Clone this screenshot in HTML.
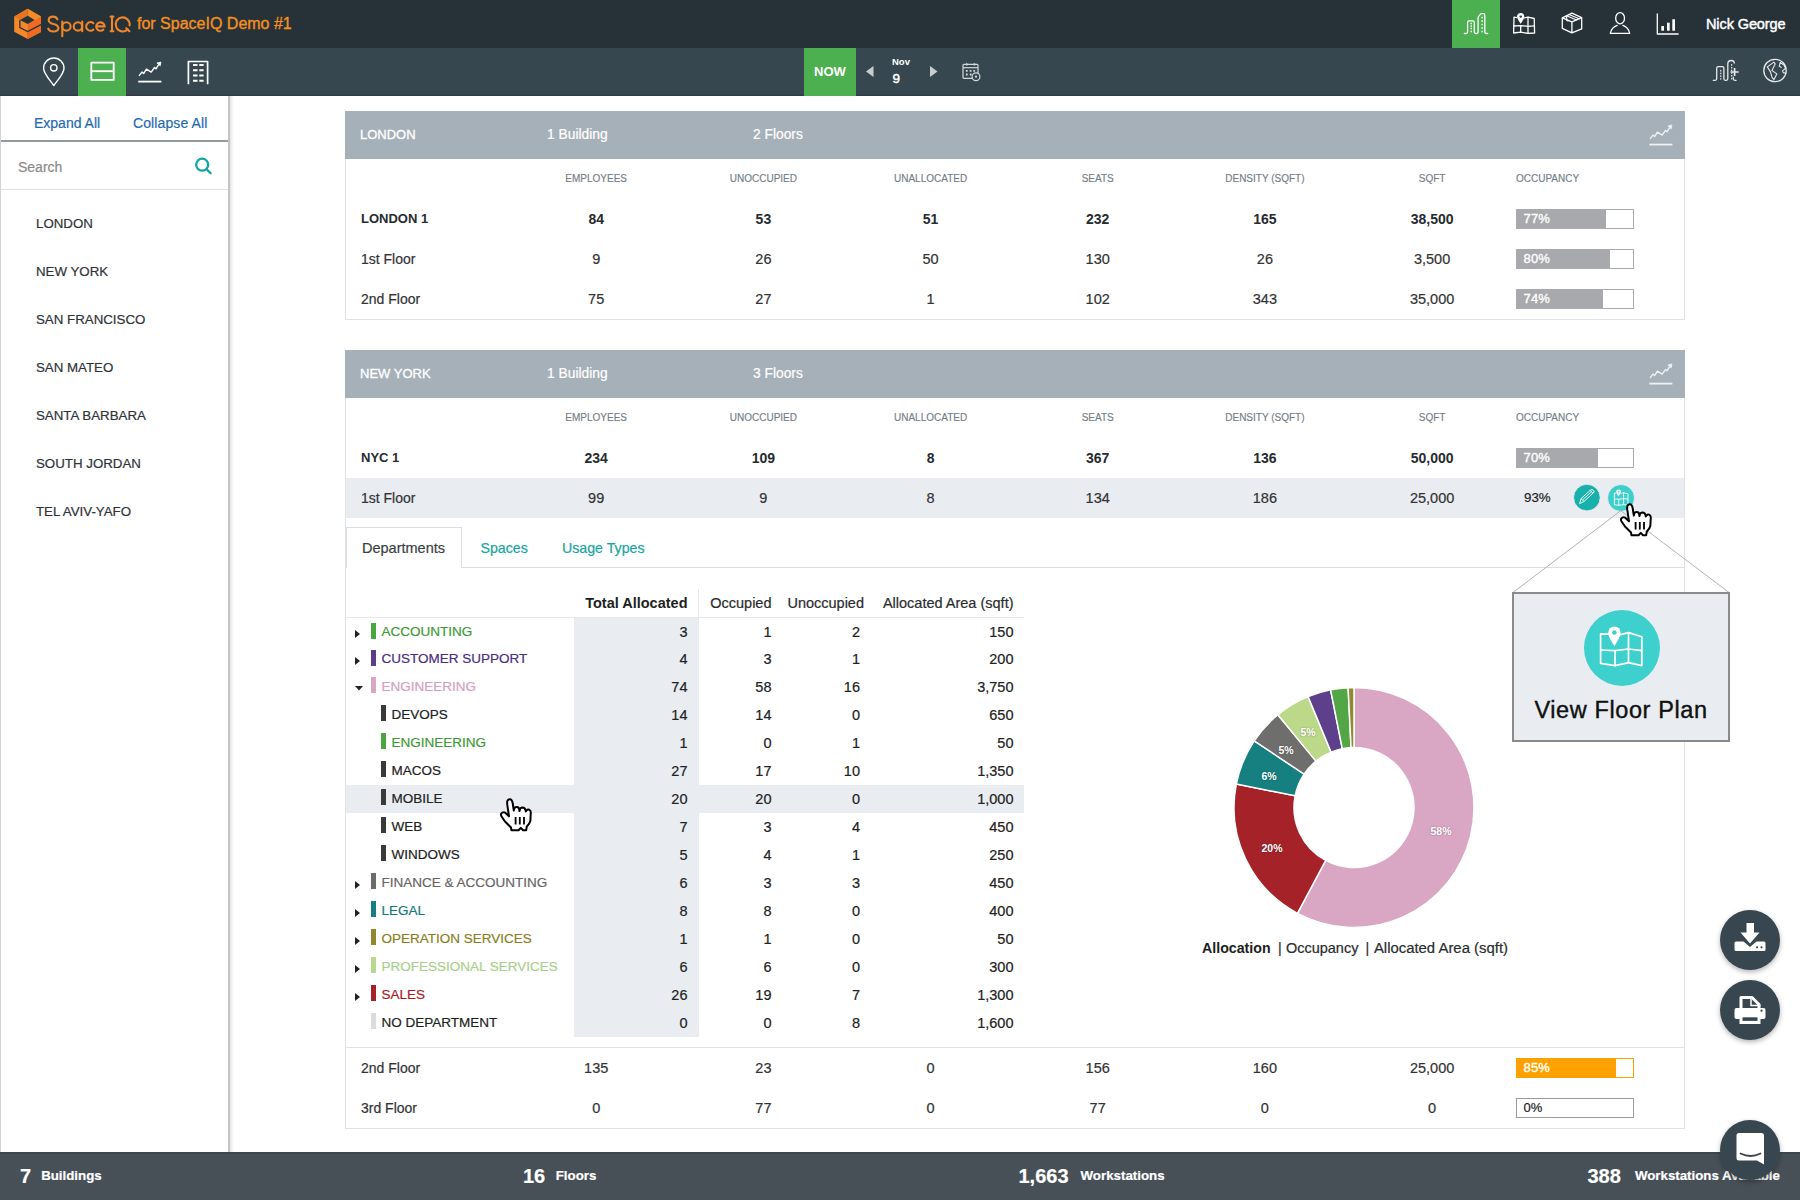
<!DOCTYPE html><html><head><meta charset="utf-8"><style>
html,body{margin:0;padding:0;}
body{width:1800px;height:1200px;overflow:hidden;position:relative;background:#fff;font-family:"Liberation Sans", sans-serif;}
.t{position:absolute;white-space:nowrap;}
.b{position:absolute;}
svg{position:absolute;overflow:visible;}
</style></head><body>
<div class="b" style="left:0px;top:0px;width:1800px;height:48px;background:#263238;"></div>
<div class="b" style="left:0px;top:48px;width:1800px;height:48px;background:#37474f;"></div>
<div class="b" style="left:0px;top:94px;width:1800px;height:2px;background:linear-gradient(#33424a,#2c3a42);"></div>
<svg style="left:0;top:0" width="60" height="48" viewBox="0 0 60 48">
<polygon points="27.7,8.8 41,16.5 41,32 27.7,39 14.2,31.7 14.2,16.5" fill="#f5892a"/>
<polygon points="27.7,24 41,16.5 41,32 27.7,39" fill="#f06a22"/>
<polygon points="27.7,8.8 41,16.5 34.6,19.9 27.7,15.7" fill="#f58a26"/>
<polygon points="27.7,8.8 14.2,16.5 19.9,20.1 27.7,15.7" fill="#e8741f"/>
<polygon points="27.7,15.7 34.6,19.9 27.7,24 19.9,20.1" fill="#263238"/>
<polyline points="19.9,20.1 19.9,27.6 27.7,31.6 41,24.6" fill="none" stroke="#263238" stroke-width="1.3"/>
<line x1="27.7" y1="9" x2="27.7" y2="15.7" stroke="#c9621c" stroke-width="0.6"/>
<line x1="27.7" y1="31.8" x2="27.7" y2="39" stroke="#c9621c" stroke-width="0.6"/>
</svg>
<svg style="left:40px;top:8px" width="96" height="34" viewBox="40 8 96 34" fill="none" stroke="#f0862a" stroke-width="2.1" stroke-linecap="round">
<path d="M57.4 19.3 C56.7 17.5 55 16.6 53 16.6 C50.4 16.6 48.7 18 48.7 20.2 C48.7 22.6 51 23.3 53.4 23.9 C56 24.5 58.4 25.4 58.4 28.1 C58.4 30.3 56.4 31.5 53.5 31.5 C50.9 31.5 49 30.5 48.2 28.6"/>
<path d="M62.3 21.6 V36.3"/><circle cx="66.4" cy="26.4" r="4.2"/>
<circle cx="77.9" cy="26.4" r="4.2"/><path d="M82.2 21.6 V31.2"/>
<path d="M93.4 23.2 A4.3 4.3 0 1 0 93.4 29.6"/>
<path d="M96.3 26.4 H104.6 A4.2 4.2 0 1 0 103.4 29.5"/>
<path d="M112 16.6 V31.3 M110.6 16.6 H113.4 M110.6 31.3 H113.4"/>
<path d="M127.6 29.4 A7 7 0 1 1 129.6 25.4"/><path d="M126.3 28.2 L129.4 31.2"/>
</svg>
<div class="t" style="left:137px;top:14.0px;line-height:20px;font-size:16px;color:#f5901f;font-weight:normal;letter-spacing:0px;-webkit-text-stroke:0.35px #f5901f;">for SpaceIQ Demo #1</div>
<div class="b" style="left:1452px;top:0px;width:48px;height:48px;background:#4caf50;"></div>
<svg style="left:1450px;top:0" width="250" height="48" viewBox="1450 0 250 48" fill="none" stroke="#fff" stroke-width="1.3" stroke-linejoin="round" stroke-linecap="round">
<path d="M1464.3 33.5 H1466.1 Q1467.6 33.5 1467.6 32 V22.3 Q1467.6 20.8 1469.1 20.8 H1472.8 Q1474.3 20.8 1474.3 22.3 V32 Q1474.3 33.5 1475.8 33.5 H1476.6 Q1478.1 33.5 1478.1 32 V17.1 L1480.5 14.2 Q1481 13.6 1481.8 13.6 H1483.3 Q1484.8 13.6 1484.8 15.1 V32 Q1484.8 33.5 1486.3 33.5 H1487.7"/>
<path d="M1471.2 23.2v0.6M1471.2 25.7v0.6M1471.2 28.2v0.6M1471.2 31.2v0.6M1482.1 17.2v0.6M1482.1 20.8v0.6M1482.1 24.2v0.6M1482.1 27.6v0.6M1482.1 31.2v0.6" stroke-width="1.4"/>
<path d="M1517 17.6 L1514 17.2 L1513.6 33 L1520.7 32.2 L1528 33.4 L1534.6 33 L1534.2 18.5 L1528 17.2 L1524.5 17.8"/>
<path d="M1513.8 26 L1520.7 25.6 L1528 26.3 L1534.4 25.8 M1520.7 25.6 V32.2 M1528 17.2 V33.4"/>
<path d="M1520.7 13 a3.6 3.6 0 0 1 3.6 3.6 c0 2.6 -3.6 7.2 -3.6 7.2 c0 0 -3.6 -4.6 -3.6 -7.2 a3.6 3.6 0 0 1 3.6 -3.6z" fill="#fff" stroke="none"/>
<circle cx="1520.7" cy="16.6" r="1.2" fill="#263238" stroke="none"/>
<path d="M1562.3 17.8 L1571.9 13.1 L1581.7 17.6 V28.9 L1571.9 32.9 L1562.3 28.4 Z M1562.3 17.8 L1571.9 21.8 L1581.7 17.6 M1571.9 21.8 V32.9"/>
<path d="M1566.5 15.8 L1576.5 20 M1569 14.5 L1579 18.8" stroke-width="1.2"/>
<path d="M1566.5 16 L1566.8 20.5 L1568 21" stroke-width="1.2"/>
<ellipse cx="1620.1" cy="18.2" rx="4.4" ry="5.6"/>
<path d="M1617.2 25.3 Q1611.5 27.2 1610.3 33.3 H1629.7 Q1628.5 27.2 1622.9 25.3"/>
<path d="M1657.3 13.8 V34 H1678.2"/>
<rect x="1661.3" y="26" width="2.7" height="4.7" fill="#fff" stroke="none"/>
<rect x="1667" y="22.7" width="2.7" height="8" fill="#fff" stroke="none"/>
<rect x="1672.3" y="19.3" width="2.7" height="11.4" fill="#fff" stroke="none"/>
</svg>
<div class="t" style="left:1706px;top:14.0px;line-height:20px;font-size:14.5px;color:#fff;font-weight:normal;letter-spacing:-0.1px;-webkit-text-stroke:0.45px #fff;">Nick George</div>
<div class="b" style="left:78px;top:48px;width:48px;height:48px;background:#4caf50;"></div>
<svg style="left:0px;top:48px" width="230" height="48" viewBox="0 48 230 48" fill="none" stroke="#fff" stroke-width="1.4" stroke-linejoin="round">
<path d="M53.8 85.5 C49.5 79.5 43.6 73.5 43.6 68.2 A10.2 10.2 0 0 1 64 68.2 C64 73.5 58.1 79.5 53.8 85.5 Z"/>
<circle cx="53.8" cy="67.8" r="3.2"/>
<rect x="91.3" y="62.7" width="22.4" height="17.2" stroke-width="1.8"/>
<line x1="91.3" y1="71.2" x2="113.7" y2="71.2" stroke-width="1.9"/>
<path d="M188.4 84.3 V61.5 H207.6 V84.3" stroke-width="1.7"/>
<path d="M193 65h4.5M199.3 65h4.3M193 70.3h4.5M199.3 70.3h4.3M193 75.5h4.5M199.3 75.5h4.3M193 80.7h4.5M199.3 80.7h4.3" stroke-width="2.1"/>
</svg>
<svg style="left:135.9px;top:60.3px" width="28" height="26" viewBox="-2 -2 28 26" fill="none" stroke="#fff" stroke-width="1.4" stroke-linejoin="round" stroke-linecap="round">
<path d="M1.4 13.4 L4 10.1 L5.6 11.6 L8.4 7.2 L13.2 10.1 L16.6 5.4 L18 6.8 L21.6 1.2"/>
<polygon points="19.3,0.9 22.9,0 22.3,3.5" fill="#fff" stroke-width="0.8"/>
<line x1="0.3" y1="19.6" x2="23.4" y2="19.6" stroke-width="1.8" stroke-linecap="butt"/>
</svg>
<div class="b" style="left:804px;top:48px;width:52px;height:48px;background:#4caf50;"></div>
<div class="t" style="left:804.0px;width:52px;text-align:center;top:61.5px;line-height:20px;font-size:13px;color:#fff;font-weight:bold;">NOW</div>
<svg style="left:866px;top:66px" width="8" height="11" viewBox="0 0 8 11"><polygon points="7.5,0 7.5,11 0,5.5" fill="#c8cdd0"/></svg>
<svg style="left:930px;top:66px" width="8" height="11" viewBox="0 0 8 11"><polygon points="0,0 0,11 7.5,5.5" fill="#c8cdd0"/></svg>
<div class="t" style="left:892px;top:55.5px;line-height:12px;font-size:9.5px;color:#fff;font-weight:bold;">Nov</div>
<div class="t" style="left:892.5px;top:70.5px;line-height:16px;font-size:13.5px;color:#fff;font-weight:normal;-webkit-text-stroke:0.45px #fff;">9</div>
<svg style="left:962px;top:62px" width="22" height="22" viewBox="0 0 22 22" fill="none" stroke="#d4d8db" stroke-width="1.2">
<path d="M10.5 16.3 H2 Q1 16.3 1 15.3 V3.3 Q1 2.3 2 2.3 H15 Q16 2.3 16 3.3 V11"/>
<line x1="1" y1="5.7" x2="16" y2="5.7"/>
<path d="M4.7 1.2 V3.6 M12.4 1.2 V3.6" stroke-width="1.5"/>
<path d="M3.9 8.9h1.8M7.7 8.9h1.8M11.3 8.9h1.8M3.9 12.5h1.8M7.7 12.5h1.8" stroke-width="1.8"/>
<circle cx="14" cy="14.7" r="3.9"/>
<circle cx="14" cy="14.7" r="1.1" fill="#d4d8db" stroke="none"/>
</svg>
<svg style="left:1700px;top:48px" width="100" height="48" viewBox="1700 48 100 48" fill="none" stroke="#e6e9eb" stroke-width="1.3" stroke-linejoin="round" stroke-linecap="round">
<path d="M1713.3 80.3 H1715.2 Q1716.7 80.3 1716.7 78.8 V68.2 Q1716.7 66.7 1718.2 66.7 H1722.4 Q1723.9 66.7 1723.9 68.2 V78.8 Q1723.9 80.3 1725.4 80.3 H1726.3 Q1727.8 80.3 1727.8 78.8 V64 Q1727.8 60.5 1731.3 60.5 Q1734.2 60.5 1734.2 63"/>
<path d="M1733.3 77.2 V78.8 Q1733.3 80.3 1734.8 80.3 H1736.1"/>
<path d="M1720.8 70.5v0.5M1720.8 73.2v0.5M1720.8 75.9v0.5M1720.8 78.6v0.5M1731.7 64.7v0.5M1731.7 67.4v0.5M1731.7 70.1v0.5M1731.7 72.8v0.5M1731.7 75.5v0.5M1731.7 78.4v0.5" stroke-width="1.3"/>
<path d="M1730.5 72 H1738.7 M1734.6 68.1 V75.9" stroke-width="1.7" stroke-linecap="butt"/>
<circle cx="1775" cy="70.5" r="11.2"/>
<path d="M1767.3 66.9 L1773.9 62.1 L1775.2 63.9 L1771.9 70.4 L1776.8 73.9 L1774 79.6 L1772.1 77.6 L1770.5 71.9 Z" stroke-width="1.1"/>
<path d="M1780.2 62.4 L1784.2 65.3 L1785.5 68.3 L1782.5 70.9 L1783.2 72.6 L1785.8 73.3 M1780.2 62.4 L1779.3 66.2 L1781.2 67.4" stroke-width="1.1"/>
</svg>
<div class="b" style="left:0px;top:96px;width:229px;height:1056px;background:#fff;border-left:1px solid #d0d4d8;box-sizing:border-box;"></div>
<div class="b" style="left:228px;top:96px;width:2px;height:1056px;background:#c3c3c3;"></div>
<div class="b" style="left:230px;top:96px;width:4px;height:1056px;background:linear-gradient(to right, rgba(0,0,0,0.1), rgba(0,0,0,0));"></div>
<div class="t" style="left:34px;top:113.0px;line-height:20px;font-size:14px;color:#1f6bb2;font-weight:normal;-webkit-text-stroke:0.2px #1f6bb2;">Expand All</div>
<div class="t" style="left:133px;top:113.0px;line-height:20px;font-size:14px;color:#1f6bb2;font-weight:normal;letter-spacing:0.1px;-webkit-text-stroke:0.2px #1f6bb2;">Collapse All</div>
<div class="b" style="left:1px;top:140px;width:227px;height:2px;background:#8e9ba5;"></div>
<div class="t" style="left:18px;top:157.0px;line-height:20px;font-size:14px;color:#8a8a8a;font-weight:normal;-webkit-text-stroke:0.2px #8a8a8a;">Search</div>
<svg style="left:194px;top:157px" width="20" height="20" viewBox="0 0 20 20" fill="none" stroke="#0fa69f" stroke-width="2.3">
<circle cx="8.2" cy="7.7" r="6"/><line x1="12.6" y1="12.2" x2="16.6" y2="16.2" stroke-linecap="round"/>
</svg>
<div class="b" style="left:1px;top:189px;width:227px;height:1px;background:#dde1e4;"></div>
<div class="t" style="left:36px;top:213.5px;line-height:20px;font-size:13.3px;color:#2e3338;font-weight:normal;-webkit-text-stroke:0.2px #2e3338;">LONDON</div>
<div class="t" style="left:36px;top:261.5px;line-height:20px;font-size:13.3px;color:#2e3338;font-weight:normal;-webkit-text-stroke:0.2px #2e3338;">NEW YORK</div>
<div class="t" style="left:36px;top:309.5px;line-height:20px;font-size:13.3px;color:#2e3338;font-weight:normal;-webkit-text-stroke:0.2px #2e3338;">SAN FRANCISCO</div>
<div class="t" style="left:36px;top:357.5px;line-height:20px;font-size:13.3px;color:#2e3338;font-weight:normal;-webkit-text-stroke:0.2px #2e3338;">SAN MATEO</div>
<div class="t" style="left:36px;top:405.5px;line-height:20px;font-size:13.3px;color:#2e3338;font-weight:normal;-webkit-text-stroke:0.2px #2e3338;">SANTA BARBARA</div>
<div class="t" style="left:36px;top:453.5px;line-height:20px;font-size:13.3px;color:#2e3338;font-weight:normal;-webkit-text-stroke:0.2px #2e3338;">SOUTH JORDAN</div>
<div class="t" style="left:36px;top:501.5px;line-height:20px;font-size:13.3px;color:#2e3338;font-weight:normal;-webkit-text-stroke:0.2px #2e3338;">TEL AVIV-YAFO</div>
<div class="b" style="left:345px;top:111px;width:1340px;height:209px;background:#fff;border:1px solid #dfe3e7;box-sizing:border-box;"></div>
<div class="b" style="left:345px;top:111px;width:1340px;height:48px;background:#a6b0b9;"></div>
<div class="t" style="left:360px;top:125.0px;line-height:20px;font-size:13px;color:#fff;font-weight:normal;-webkit-text-stroke:0.3px #fff;">LONDON</div>
<div class="t" style="left:547px;top:125.0px;line-height:20px;font-size:13.8px;color:#fff;font-weight:normal;-webkit-text-stroke:0.2px #fff;">1 Building</div>
<div class="t" style="left:753px;top:125.0px;line-height:20px;font-size:13.8px;color:#fff;font-weight:normal;-webkit-text-stroke:0.2px #fff;">2 Floors</div>
<svg style="left:1647px;top:123px" width="28" height="26" viewBox="-2 -2 28 26" fill="none" stroke="#eef1f3" stroke-width="1.4" stroke-linejoin="round" stroke-linecap="round">
<path d="M1.4 13.4 L4 10.1 L5.6 11.6 L8.4 7.2 L13.2 10.1 L16.6 5.4 L18 6.8 L21.6 1.2"/>
<polygon points="19.3,0.9 22.9,0 22.3,3.5" fill="#eef1f3" stroke-width="0.8"/>
<line x1="0.3" y1="19.6" x2="23.4" y2="19.6" stroke-width="1.8" stroke-linecap="butt"/>
</svg>
<div class="t" style="left:516.2px;width:160px;text-align:center;top:168.7px;line-height:20px;font-size:10px;color:#737e87;font-weight:normal;-webkit-text-stroke:0.15px #737e87;">EMPLOYEES</div>
<div class="t" style="left:683.4px;width:160px;text-align:center;top:168.7px;line-height:20px;font-size:10px;color:#737e87;font-weight:normal;-webkit-text-stroke:0.15px #737e87;">UNOCCUPIED</div>
<div class="t" style="left:850.6px;width:160px;text-align:center;top:168.7px;line-height:20px;font-size:10px;color:#737e87;font-weight:normal;-webkit-text-stroke:0.15px #737e87;">UNALLOCATED</div>
<div class="t" style="left:1017.7px;width:160px;text-align:center;top:168.7px;line-height:20px;font-size:10px;color:#737e87;font-weight:normal;-webkit-text-stroke:0.15px #737e87;">SEATS</div>
<div class="t" style="left:1184.9px;width:160px;text-align:center;top:168.7px;line-height:20px;font-size:10px;color:#737e87;font-weight:normal;-webkit-text-stroke:0.15px #737e87;">DENSITY (SQFT)</div>
<div class="t" style="left:1352.1px;width:160px;text-align:center;top:168.7px;line-height:20px;font-size:10px;color:#737e87;font-weight:normal;-webkit-text-stroke:0.15px #737e87;">SQFT</div>
<div class="t" style="left:1516px;top:168.7px;line-height:20px;font-size:10px;color:#737e87;font-weight:normal;-webkit-text-stroke:0.15px #737e87;">OCCUPANCY</div>
<div class="t" style="left:361px;top:209.0px;line-height:20px;font-size:13px;color:#262b30;font-weight:bold;">LONDON 1</div>
<div class="t" style="left:516.2px;width:160px;text-align:center;top:209.0px;line-height:20px;font-size:14px;color:#262b30;font-weight:bold;">84</div>
<div class="t" style="left:683.4px;width:160px;text-align:center;top:209.0px;line-height:20px;font-size:14px;color:#262b30;font-weight:bold;">53</div>
<div class="t" style="left:850.6px;width:160px;text-align:center;top:209.0px;line-height:20px;font-size:14px;color:#262b30;font-weight:bold;">51</div>
<div class="t" style="left:1017.7px;width:160px;text-align:center;top:209.0px;line-height:20px;font-size:14px;color:#262b30;font-weight:bold;">232</div>
<div class="t" style="left:1184.9px;width:160px;text-align:center;top:209.0px;line-height:20px;font-size:14px;color:#262b30;font-weight:bold;">165</div>
<div class="t" style="left:1352.1px;width:160px;text-align:center;top:209.0px;line-height:20px;font-size:14px;color:#262b30;font-weight:bold;">38,500</div>
<div class="b" style="left:1516px;top:209px;width:118px;height:20px;background:#fff;border:1px solid #a7a9ac;box-sizing:border-box;"></div>
<div class="b" style="left:1516px;top:209px;width:90px;height:20px;background:#a7a9ac;"></div>
<div class="t" style="left:1523.5px;top:209.0px;line-height:20px;font-size:13px;color:#fff;font-weight:normal;letter-spacing:0.2px;-webkit-text-stroke:0.35px #fff;">77%</div>
<div class="t" style="left:361px;top:249.0px;line-height:20px;font-size:14px;color:#333;font-weight:normal;-webkit-text-stroke:0.2px #333;">1st Floor</div>
<div class="t" style="left:516.2px;width:160px;text-align:center;top:249.0px;line-height:20px;font-size:14.5px;color:#333;font-weight:normal;-webkit-text-stroke:0.2px #333;">9</div>
<div class="t" style="left:683.4px;width:160px;text-align:center;top:249.0px;line-height:20px;font-size:14.5px;color:#333;font-weight:normal;-webkit-text-stroke:0.2px #333;">26</div>
<div class="t" style="left:850.6px;width:160px;text-align:center;top:249.0px;line-height:20px;font-size:14.5px;color:#333;font-weight:normal;-webkit-text-stroke:0.2px #333;">50</div>
<div class="t" style="left:1017.7px;width:160px;text-align:center;top:249.0px;line-height:20px;font-size:14.5px;color:#333;font-weight:normal;-webkit-text-stroke:0.2px #333;">130</div>
<div class="t" style="left:1184.9px;width:160px;text-align:center;top:249.0px;line-height:20px;font-size:14.5px;color:#333;font-weight:normal;-webkit-text-stroke:0.2px #333;">26</div>
<div class="t" style="left:1352.1px;width:160px;text-align:center;top:249.0px;line-height:20px;font-size:14.5px;color:#333;font-weight:normal;-webkit-text-stroke:0.2px #333;">3,500</div>
<div class="b" style="left:1516px;top:249px;width:118px;height:20px;background:#fff;border:1px solid #a7a9ac;box-sizing:border-box;"></div>
<div class="b" style="left:1516px;top:249px;width:94px;height:20px;background:#a7a9ac;"></div>
<div class="t" style="left:1523.5px;top:249.0px;line-height:20px;font-size:13px;color:#fff;font-weight:normal;letter-spacing:0.2px;-webkit-text-stroke:0.35px #fff;">80%</div>
<div class="t" style="left:361px;top:289.0px;line-height:20px;font-size:14px;color:#333;font-weight:normal;-webkit-text-stroke:0.2px #333;">2nd Floor</div>
<div class="t" style="left:516.2px;width:160px;text-align:center;top:289.0px;line-height:20px;font-size:14.5px;color:#333;font-weight:normal;-webkit-text-stroke:0.2px #333;">75</div>
<div class="t" style="left:683.4px;width:160px;text-align:center;top:289.0px;line-height:20px;font-size:14.5px;color:#333;font-weight:normal;-webkit-text-stroke:0.2px #333;">27</div>
<div class="t" style="left:850.6px;width:160px;text-align:center;top:289.0px;line-height:20px;font-size:14.5px;color:#333;font-weight:normal;-webkit-text-stroke:0.2px #333;">1</div>
<div class="t" style="left:1017.7px;width:160px;text-align:center;top:289.0px;line-height:20px;font-size:14.5px;color:#333;font-weight:normal;-webkit-text-stroke:0.2px #333;">102</div>
<div class="t" style="left:1184.9px;width:160px;text-align:center;top:289.0px;line-height:20px;font-size:14.5px;color:#333;font-weight:normal;-webkit-text-stroke:0.2px #333;">343</div>
<div class="t" style="left:1352.1px;width:160px;text-align:center;top:289.0px;line-height:20px;font-size:14.5px;color:#333;font-weight:normal;-webkit-text-stroke:0.2px #333;">35,000</div>
<div class="b" style="left:1516px;top:289px;width:118px;height:20px;background:#fff;border:1px solid #a7a9ac;box-sizing:border-box;"></div>
<div class="b" style="left:1516px;top:289px;width:87px;height:20px;background:#a7a9ac;"></div>
<div class="t" style="left:1523.5px;top:289.0px;line-height:20px;font-size:13px;color:#fff;font-weight:normal;letter-spacing:0.2px;-webkit-text-stroke:0.35px #fff;">74%</div>
<div class="b" style="left:345px;top:350px;width:1340px;height:779px;background:#fff;border:1px solid #dfe3e7;box-sizing:border-box;"></div>
<div class="b" style="left:345px;top:350px;width:1340px;height:48px;background:#a6b0b9;"></div>
<div class="t" style="left:360px;top:364.0px;line-height:20px;font-size:13px;color:#fff;font-weight:normal;-webkit-text-stroke:0.3px #fff;">NEW YORK</div>
<div class="t" style="left:547px;top:364.0px;line-height:20px;font-size:13.8px;color:#fff;font-weight:normal;-webkit-text-stroke:0.2px #fff;">1 Building</div>
<div class="t" style="left:753px;top:364.0px;line-height:20px;font-size:13.8px;color:#fff;font-weight:normal;-webkit-text-stroke:0.2px #fff;">3 Floors</div>
<svg style="left:1647px;top:362px" width="28" height="26" viewBox="-2 -2 28 26" fill="none" stroke="#eef1f3" stroke-width="1.4" stroke-linejoin="round" stroke-linecap="round">
<path d="M1.4 13.4 L4 10.1 L5.6 11.6 L8.4 7.2 L13.2 10.1 L16.6 5.4 L18 6.8 L21.6 1.2"/>
<polygon points="19.3,0.9 22.9,0 22.3,3.5" fill="#eef1f3" stroke-width="0.8"/>
<line x1="0.3" y1="19.6" x2="23.4" y2="19.6" stroke-width="1.8" stroke-linecap="butt"/>
</svg>
<div class="t" style="left:516.2px;width:160px;text-align:center;top:407.7px;line-height:20px;font-size:10px;color:#737e87;font-weight:normal;-webkit-text-stroke:0.15px #737e87;">EMPLOYEES</div>
<div class="t" style="left:683.4px;width:160px;text-align:center;top:407.7px;line-height:20px;font-size:10px;color:#737e87;font-weight:normal;-webkit-text-stroke:0.15px #737e87;">UNOCCUPIED</div>
<div class="t" style="left:850.6px;width:160px;text-align:center;top:407.7px;line-height:20px;font-size:10px;color:#737e87;font-weight:normal;-webkit-text-stroke:0.15px #737e87;">UNALLOCATED</div>
<div class="t" style="left:1017.7px;width:160px;text-align:center;top:407.7px;line-height:20px;font-size:10px;color:#737e87;font-weight:normal;-webkit-text-stroke:0.15px #737e87;">SEATS</div>
<div class="t" style="left:1184.9px;width:160px;text-align:center;top:407.7px;line-height:20px;font-size:10px;color:#737e87;font-weight:normal;-webkit-text-stroke:0.15px #737e87;">DENSITY (SQFT)</div>
<div class="t" style="left:1352.1px;width:160px;text-align:center;top:407.7px;line-height:20px;font-size:10px;color:#737e87;font-weight:normal;-webkit-text-stroke:0.15px #737e87;">SQFT</div>
<div class="t" style="left:1516px;top:407.7px;line-height:20px;font-size:10px;color:#737e87;font-weight:normal;-webkit-text-stroke:0.15px #737e87;">OCCUPANCY</div>
<div class="t" style="left:361px;top:448.0px;line-height:20px;font-size:13px;color:#262b30;font-weight:bold;">NYC 1</div>
<div class="t" style="left:516.2px;width:160px;text-align:center;top:448.0px;line-height:20px;font-size:14px;color:#262b30;font-weight:bold;">234</div>
<div class="t" style="left:683.4px;width:160px;text-align:center;top:448.0px;line-height:20px;font-size:14px;color:#262b30;font-weight:bold;">109</div>
<div class="t" style="left:850.6px;width:160px;text-align:center;top:448.0px;line-height:20px;font-size:14px;color:#262b30;font-weight:bold;">8</div>
<div class="t" style="left:1017.7px;width:160px;text-align:center;top:448.0px;line-height:20px;font-size:14px;color:#262b30;font-weight:bold;">367</div>
<div class="t" style="left:1184.9px;width:160px;text-align:center;top:448.0px;line-height:20px;font-size:14px;color:#262b30;font-weight:bold;">136</div>
<div class="t" style="left:1352.1px;width:160px;text-align:center;top:448.0px;line-height:20px;font-size:14px;color:#262b30;font-weight:bold;">50,000</div>
<div class="b" style="left:1516px;top:448px;width:118px;height:20px;background:#fff;border:1px solid #a7a9ac;box-sizing:border-box;"></div>
<div class="b" style="left:1516px;top:448px;width:82px;height:20px;background:#a7a9ac;"></div>
<div class="t" style="left:1523.5px;top:448.0px;line-height:20px;font-size:13px;color:#fff;font-weight:normal;letter-spacing:0.2px;-webkit-text-stroke:0.35px #fff;">70%</div>
<div class="b" style="left:346px;top:478px;width:1338px;height:40px;background:#e9edf1;"></div>
<div class="t" style="left:361px;top:488.0px;line-height:20px;font-size:14px;color:#333;font-weight:normal;-webkit-text-stroke:0.2px #333;">1st Floor</div>
<div class="t" style="left:516.2px;width:160px;text-align:center;top:488.0px;line-height:20px;font-size:14.5px;color:#333;font-weight:normal;-webkit-text-stroke:0.2px #333;">99</div>
<div class="t" style="left:683.4px;width:160px;text-align:center;top:488.0px;line-height:20px;font-size:14.5px;color:#333;font-weight:normal;-webkit-text-stroke:0.2px #333;">9</div>
<div class="t" style="left:850.6px;width:160px;text-align:center;top:488.0px;line-height:20px;font-size:14.5px;color:#333;font-weight:normal;-webkit-text-stroke:0.2px #333;">8</div>
<div class="t" style="left:1017.7px;width:160px;text-align:center;top:488.0px;line-height:20px;font-size:14.5px;color:#333;font-weight:normal;-webkit-text-stroke:0.2px #333;">134</div>
<div class="t" style="left:1184.9px;width:160px;text-align:center;top:488.0px;line-height:20px;font-size:14.5px;color:#333;font-weight:normal;-webkit-text-stroke:0.2px #333;">186</div>
<div class="t" style="left:1352.1px;width:160px;text-align:center;top:488.0px;line-height:20px;font-size:14.5px;color:#333;font-weight:normal;-webkit-text-stroke:0.2px #333;">25,000</div>
<div class="t" style="left:1524px;top:488.0px;line-height:20px;font-size:13.3px;color:#1e1e1e;font-weight:normal;-webkit-text-stroke:0.2px #1e1e1e;">93%</div>
<svg style="left:1572px;top:483px" width="30" height="30" viewBox="0 0 30 30">
<circle cx="14.9" cy="14.6" r="13.3" fill="#18b0aa" stroke="#fbeef3" stroke-width="0.8"/>
<g fill="none" stroke="#fff" stroke-width="0.9" stroke-linejoin="round">
<path d="M7.6 20.6 L9.1 15.6 L18.2 7.3 Q19.9 5.8 21.5 7.4 Q23.1 9.1 20.9 10.3 L11.9 18.5 Z"/>
<path d="M10.5 17 L19.5 8.8 M18.2 7.3 L20.9 10.3 M9.1 15.6 L11.9 18.5"/>
</g>
</svg>
<svg style="left:1606px;top:483px" width="30" height="30" viewBox="0 0 30 30">
<circle cx="15" cy="15" r="13.5" fill="#3dcfca" stroke="#fbeef3" stroke-width="0.8"/>
<g fill="none" stroke="#fff" stroke-width="0.9" stroke-linejoin="round">
<path d="M10 10.2 L8.4 10 V21.8 L12.8 22.3 L17.6 21.6 L22 22.2 V10.8 L17.6 9.8 L15.5 10.1"/>
<path d="M8.4 16 L12.8 16.2 L17.6 15.7 L22 16.1 M12.8 16.2 V22.3 M17.6 9.8 V21.6"/>
</g>
<path d="M12.6 6.4 a2.4 2.4 0 0 1 2.4 2.4 c0 1.7 -2.4 4.6 -2.4 4.6 c0 0 -2.4 -2.9 -2.4 -4.6 a2.4 2.4 0 0 1 2.4 -2.4z" fill="#fff"/>
<circle cx="12.6" cy="8.8" r="0.9" fill="#3dcfca"/>
</svg>
<div class="b" style="left:346px;top:567px;width:1338px;height:1px;background:#dcdfe2;"></div>
<div class="b" style="left:346px;top:527px;width:116px;height:41px;background:#fff;border:1px solid #dcdfe2;border-bottom:none;box-sizing:border-box;"></div>
<div class="t" style="left:362px;top:538.0px;line-height:20px;font-size:14.5px;color:#3a3f44;font-weight:normal;-webkit-text-stroke:0.2px #3a3f44;">Departments</div>
<div class="t" style="left:480.5px;top:538.0px;line-height:20px;font-size:14.2px;color:#16a6a0;font-weight:normal;-webkit-text-stroke:0.2px #16a6a0;">Spaces</div>
<div class="t" style="left:562px;top:538.0px;line-height:20px;font-size:14.2px;color:#16a6a0;font-weight:normal;-webkit-text-stroke:0.2px #16a6a0;">Usage Types</div>
<div class="b" style="left:346px;top:617px;width:678px;height:1px;background:#e6e9ec;"></div>
<div class="b" style="left:698px;top:589px;width:1px;height:28px;background:#e6e9ec;"></div>
<div class="b" style="left:574px;top:618px;width:125px;height:419px;background:#e9edf1;"></div>
<div class="b" style="left:346px;top:785px;width:678px;height:28px;background:#e9edf1;"></div>
<div class="t" style="left:387.5px;width:300px;text-align:right;top:593.0px;line-height:20px;font-size:14.5px;color:#1d1f21;font-weight:bold;">Total Allocated</div>
<div class="t" style="left:471.5px;width:300px;text-align:right;top:593.0px;line-height:20px;font-size:14.5px;color:#2a2c2e;font-weight:normal;-webkit-text-stroke:0.2px #2a2c2e;">Occupied</div>
<div class="t" style="left:564px;width:300px;text-align:right;top:593.0px;line-height:20px;font-size:14.5px;color:#2a2c2e;font-weight:normal;-webkit-text-stroke:0.2px #2a2c2e;">Unoccupied</div>
<div class="t" style="left:713.5px;width:300px;text-align:right;top:593.0px;line-height:20px;font-size:14.5px;color:#2a2c2e;font-weight:normal;-webkit-text-stroke:0.2px #2a2c2e;">Allocated Area (sqft)</div>
<div class="b" style="left:371px;top:622.7px;width:5px;height:16px;background:#4aa63f;"></div>
<div class="t" style="left:381.5px;top:622.0px;line-height:20px;font-size:13.5px;color:#3d9a35;font-weight:normal;-webkit-text-stroke:0.2px #3d9a35;">ACCOUNTING</div>
<svg style="left:355px;top:630px" width="6" height="8" viewBox="0 0 6 8"><polygon points="0,0 5,4 0,8" fill="#222"/></svg>
<div class="t" style="left:587.5px;width:100px;text-align:right;top:622.0px;line-height:20px;font-size:14.5px;color:#222;font-weight:normal;-webkit-text-stroke:0.2px #222;">3</div>
<div class="t" style="left:671.5px;width:100px;text-align:right;top:622.0px;line-height:20px;font-size:14.5px;color:#222;font-weight:normal;-webkit-text-stroke:0.2px #222;">1</div>
<div class="t" style="left:760px;width:100px;text-align:right;top:622.0px;line-height:20px;font-size:14.5px;color:#222;font-weight:normal;-webkit-text-stroke:0.2px #222;">2</div>
<div class="t" style="left:913.5px;width:100px;text-align:right;top:622.0px;line-height:20px;font-size:14.5px;color:#222;font-weight:normal;-webkit-text-stroke:0.2px #222;">150</div>
<div class="b" style="left:371px;top:649.7px;width:5px;height:16px;background:#5b3d8c;"></div>
<div class="t" style="left:381.5px;top:649.0px;line-height:20px;font-size:13.5px;color:#4b2d83;font-weight:normal;-webkit-text-stroke:0.2px #4b2d83;">CUSTOMER SUPPORT</div>
<svg style="left:355px;top:657px" width="6" height="8" viewBox="0 0 6 8"><polygon points="0,0 5,4 0,8" fill="#222"/></svg>
<div class="t" style="left:587.5px;width:100px;text-align:right;top:649.0px;line-height:20px;font-size:14.5px;color:#222;font-weight:normal;-webkit-text-stroke:0.2px #222;">4</div>
<div class="t" style="left:671.5px;width:100px;text-align:right;top:649.0px;line-height:20px;font-size:14.5px;color:#222;font-weight:normal;-webkit-text-stroke:0.2px #222;">3</div>
<div class="t" style="left:760px;width:100px;text-align:right;top:649.0px;line-height:20px;font-size:14.5px;color:#222;font-weight:normal;-webkit-text-stroke:0.2px #222;">1</div>
<div class="t" style="left:913.5px;width:100px;text-align:right;top:649.0px;line-height:20px;font-size:14.5px;color:#222;font-weight:normal;-webkit-text-stroke:0.2px #222;">200</div>
<div class="b" style="left:371px;top:677.4000000000001px;width:5px;height:16px;background:#d9a6c3;"></div>
<div class="t" style="left:381.5px;top:676.7px;line-height:20px;font-size:13.5px;color:#d59ec0;font-weight:normal;-webkit-text-stroke:0.2px #d59ec0;">ENGINEERING</div>
<svg style="left:355px;top:686.2px" width="9" height="6" viewBox="0 0 9 6"><polygon points="0,0 8,0 4,4.5" fill="#222"/></svg>
<div class="t" style="left:587.5px;width:100px;text-align:right;top:676.7px;line-height:20px;font-size:14.5px;color:#222;font-weight:normal;-webkit-text-stroke:0.2px #222;">74</div>
<div class="t" style="left:671.5px;width:100px;text-align:right;top:676.7px;line-height:20px;font-size:14.5px;color:#222;font-weight:normal;-webkit-text-stroke:0.2px #222;">58</div>
<div class="t" style="left:760px;width:100px;text-align:right;top:676.7px;line-height:20px;font-size:14.5px;color:#222;font-weight:normal;-webkit-text-stroke:0.2px #222;">16</div>
<div class="t" style="left:913.5px;width:100px;text-align:right;top:676.7px;line-height:20px;font-size:14.5px;color:#222;font-weight:normal;-webkit-text-stroke:0.2px #222;">3,750</div>
<div class="b" style="left:381px;top:705.4000000000001px;width:5px;height:16px;background:#3a3a3a;"></div>
<div class="t" style="left:391.5px;top:704.7px;line-height:20px;font-size:13.5px;color:#222;font-weight:normal;-webkit-text-stroke:0.2px #222;">DEVOPS</div>
<div class="t" style="left:587.5px;width:100px;text-align:right;top:704.7px;line-height:20px;font-size:14.5px;color:#222;font-weight:normal;-webkit-text-stroke:0.2px #222;">14</div>
<div class="t" style="left:671.5px;width:100px;text-align:right;top:704.7px;line-height:20px;font-size:14.5px;color:#222;font-weight:normal;-webkit-text-stroke:0.2px #222;">14</div>
<div class="t" style="left:760px;width:100px;text-align:right;top:704.7px;line-height:20px;font-size:14.5px;color:#222;font-weight:normal;-webkit-text-stroke:0.2px #222;">0</div>
<div class="t" style="left:913.5px;width:100px;text-align:right;top:704.7px;line-height:20px;font-size:14.5px;color:#222;font-weight:normal;-webkit-text-stroke:0.2px #222;">650</div>
<div class="b" style="left:381px;top:733.4000000000001px;width:5px;height:16px;background:#4aa63f;"></div>
<div class="t" style="left:391.5px;top:732.7px;line-height:20px;font-size:13.5px;color:#3d9a35;font-weight:normal;-webkit-text-stroke:0.2px #3d9a35;">ENGINEERING</div>
<div class="t" style="left:587.5px;width:100px;text-align:right;top:732.7px;line-height:20px;font-size:14.5px;color:#222;font-weight:normal;-webkit-text-stroke:0.2px #222;">1</div>
<div class="t" style="left:671.5px;width:100px;text-align:right;top:732.7px;line-height:20px;font-size:14.5px;color:#222;font-weight:normal;-webkit-text-stroke:0.2px #222;">0</div>
<div class="t" style="left:760px;width:100px;text-align:right;top:732.7px;line-height:20px;font-size:14.5px;color:#222;font-weight:normal;-webkit-text-stroke:0.2px #222;">1</div>
<div class="t" style="left:913.5px;width:100px;text-align:right;top:732.7px;line-height:20px;font-size:14.5px;color:#222;font-weight:normal;-webkit-text-stroke:0.2px #222;">50</div>
<div class="b" style="left:381px;top:761.4000000000001px;width:5px;height:16px;background:#3a3a3a;"></div>
<div class="t" style="left:391.5px;top:760.7px;line-height:20px;font-size:13.5px;color:#222;font-weight:normal;-webkit-text-stroke:0.2px #222;">MACOS</div>
<div class="t" style="left:587.5px;width:100px;text-align:right;top:760.7px;line-height:20px;font-size:14.5px;color:#222;font-weight:normal;-webkit-text-stroke:0.2px #222;">27</div>
<div class="t" style="left:671.5px;width:100px;text-align:right;top:760.7px;line-height:20px;font-size:14.5px;color:#222;font-weight:normal;-webkit-text-stroke:0.2px #222;">17</div>
<div class="t" style="left:760px;width:100px;text-align:right;top:760.7px;line-height:20px;font-size:14.5px;color:#222;font-weight:normal;-webkit-text-stroke:0.2px #222;">10</div>
<div class="t" style="left:913.5px;width:100px;text-align:right;top:760.7px;line-height:20px;font-size:14.5px;color:#222;font-weight:normal;-webkit-text-stroke:0.2px #222;">1,350</div>
<div class="b" style="left:381px;top:789.4000000000001px;width:5px;height:16px;background:#3a3a3a;"></div>
<div class="t" style="left:391.5px;top:788.7px;line-height:20px;font-size:13.5px;color:#222;font-weight:normal;-webkit-text-stroke:0.2px #222;">MOBILE</div>
<div class="t" style="left:587.5px;width:100px;text-align:right;top:788.7px;line-height:20px;font-size:14.5px;color:#222;font-weight:normal;-webkit-text-stroke:0.2px #222;">20</div>
<div class="t" style="left:671.5px;width:100px;text-align:right;top:788.7px;line-height:20px;font-size:14.5px;color:#222;font-weight:normal;-webkit-text-stroke:0.2px #222;">20</div>
<div class="t" style="left:760px;width:100px;text-align:right;top:788.7px;line-height:20px;font-size:14.5px;color:#222;font-weight:normal;-webkit-text-stroke:0.2px #222;">0</div>
<div class="t" style="left:913.5px;width:100px;text-align:right;top:788.7px;line-height:20px;font-size:14.5px;color:#222;font-weight:normal;-webkit-text-stroke:0.2px #222;">1,000</div>
<div class="b" style="left:381px;top:817.4000000000001px;width:5px;height:16px;background:#3a3a3a;"></div>
<div class="t" style="left:391.5px;top:816.7px;line-height:20px;font-size:13.5px;color:#222;font-weight:normal;-webkit-text-stroke:0.2px #222;">WEB</div>
<div class="t" style="left:587.5px;width:100px;text-align:right;top:816.7px;line-height:20px;font-size:14.5px;color:#222;font-weight:normal;-webkit-text-stroke:0.2px #222;">7</div>
<div class="t" style="left:671.5px;width:100px;text-align:right;top:816.7px;line-height:20px;font-size:14.5px;color:#222;font-weight:normal;-webkit-text-stroke:0.2px #222;">3</div>
<div class="t" style="left:760px;width:100px;text-align:right;top:816.7px;line-height:20px;font-size:14.5px;color:#222;font-weight:normal;-webkit-text-stroke:0.2px #222;">4</div>
<div class="t" style="left:913.5px;width:100px;text-align:right;top:816.7px;line-height:20px;font-size:14.5px;color:#222;font-weight:normal;-webkit-text-stroke:0.2px #222;">450</div>
<div class="b" style="left:381px;top:845.4000000000001px;width:5px;height:16px;background:#3a3a3a;"></div>
<div class="t" style="left:391.5px;top:844.7px;line-height:20px;font-size:13.5px;color:#222;font-weight:normal;-webkit-text-stroke:0.2px #222;">WINDOWS</div>
<div class="t" style="left:587.5px;width:100px;text-align:right;top:844.7px;line-height:20px;font-size:14.5px;color:#222;font-weight:normal;-webkit-text-stroke:0.2px #222;">5</div>
<div class="t" style="left:671.5px;width:100px;text-align:right;top:844.7px;line-height:20px;font-size:14.5px;color:#222;font-weight:normal;-webkit-text-stroke:0.2px #222;">4</div>
<div class="t" style="left:760px;width:100px;text-align:right;top:844.7px;line-height:20px;font-size:14.5px;color:#222;font-weight:normal;-webkit-text-stroke:0.2px #222;">1</div>
<div class="t" style="left:913.5px;width:100px;text-align:right;top:844.7px;line-height:20px;font-size:14.5px;color:#222;font-weight:normal;-webkit-text-stroke:0.2px #222;">250</div>
<div class="b" style="left:371px;top:873.4000000000001px;width:5px;height:16px;background:#6c6c6c;"></div>
<div class="t" style="left:381.5px;top:872.7px;line-height:20px;font-size:13.5px;color:#666;font-weight:normal;-webkit-text-stroke:0.2px #666;">FINANCE &amp; ACCOUNTING</div>
<svg style="left:355px;top:880.7px" width="6" height="8" viewBox="0 0 6 8"><polygon points="0,0 5,4 0,8" fill="#222"/></svg>
<div class="t" style="left:587.5px;width:100px;text-align:right;top:872.7px;line-height:20px;font-size:14.5px;color:#222;font-weight:normal;-webkit-text-stroke:0.2px #222;">6</div>
<div class="t" style="left:671.5px;width:100px;text-align:right;top:872.7px;line-height:20px;font-size:14.5px;color:#222;font-weight:normal;-webkit-text-stroke:0.2px #222;">3</div>
<div class="t" style="left:760px;width:100px;text-align:right;top:872.7px;line-height:20px;font-size:14.5px;color:#222;font-weight:normal;-webkit-text-stroke:0.2px #222;">3</div>
<div class="t" style="left:913.5px;width:100px;text-align:right;top:872.7px;line-height:20px;font-size:14.5px;color:#222;font-weight:normal;-webkit-text-stroke:0.2px #222;">450</div>
<div class="b" style="left:371px;top:901.4000000000001px;width:5px;height:16px;background:#167f7f;"></div>
<div class="t" style="left:381.5px;top:900.7px;line-height:20px;font-size:13.5px;color:#127a7a;font-weight:normal;-webkit-text-stroke:0.2px #127a7a;">LEGAL</div>
<svg style="left:355px;top:908.7px" width="6" height="8" viewBox="0 0 6 8"><polygon points="0,0 5,4 0,8" fill="#222"/></svg>
<div class="t" style="left:587.5px;width:100px;text-align:right;top:900.7px;line-height:20px;font-size:14.5px;color:#222;font-weight:normal;-webkit-text-stroke:0.2px #222;">8</div>
<div class="t" style="left:671.5px;width:100px;text-align:right;top:900.7px;line-height:20px;font-size:14.5px;color:#222;font-weight:normal;-webkit-text-stroke:0.2px #222;">8</div>
<div class="t" style="left:760px;width:100px;text-align:right;top:900.7px;line-height:20px;font-size:14.5px;color:#222;font-weight:normal;-webkit-text-stroke:0.2px #222;">0</div>
<div class="t" style="left:913.5px;width:100px;text-align:right;top:900.7px;line-height:20px;font-size:14.5px;color:#222;font-weight:normal;-webkit-text-stroke:0.2px #222;">400</div>
<div class="b" style="left:371px;top:929.4000000000001px;width:5px;height:16px;background:#8f8a30;"></div>
<div class="t" style="left:381.5px;top:928.7px;line-height:20px;font-size:13.5px;color:#8a7f1e;font-weight:normal;-webkit-text-stroke:0.2px #8a7f1e;">OPERATION SERVICES</div>
<svg style="left:355px;top:936.7px" width="6" height="8" viewBox="0 0 6 8"><polygon points="0,0 5,4 0,8" fill="#222"/></svg>
<div class="t" style="left:587.5px;width:100px;text-align:right;top:928.7px;line-height:20px;font-size:14.5px;color:#222;font-weight:normal;-webkit-text-stroke:0.2px #222;">1</div>
<div class="t" style="left:671.5px;width:100px;text-align:right;top:928.7px;line-height:20px;font-size:14.5px;color:#222;font-weight:normal;-webkit-text-stroke:0.2px #222;">1</div>
<div class="t" style="left:760px;width:100px;text-align:right;top:928.7px;line-height:20px;font-size:14.5px;color:#222;font-weight:normal;-webkit-text-stroke:0.2px #222;">0</div>
<div class="t" style="left:913.5px;width:100px;text-align:right;top:928.7px;line-height:20px;font-size:14.5px;color:#222;font-weight:normal;-webkit-text-stroke:0.2px #222;">50</div>
<div class="b" style="left:371px;top:957.4000000000001px;width:5px;height:16px;background:#b5d98e;"></div>
<div class="t" style="left:381.5px;top:956.7px;line-height:20px;font-size:13.5px;color:#a9d18a;font-weight:normal;-webkit-text-stroke:0.2px #a9d18a;">PROFESSIONAL SERVICES</div>
<svg style="left:355px;top:964.7px" width="6" height="8" viewBox="0 0 6 8"><polygon points="0,0 5,4 0,8" fill="#222"/></svg>
<div class="t" style="left:587.5px;width:100px;text-align:right;top:956.7px;line-height:20px;font-size:14.5px;color:#222;font-weight:normal;-webkit-text-stroke:0.2px #222;">6</div>
<div class="t" style="left:671.5px;width:100px;text-align:right;top:956.7px;line-height:20px;font-size:14.5px;color:#222;font-weight:normal;-webkit-text-stroke:0.2px #222;">6</div>
<div class="t" style="left:760px;width:100px;text-align:right;top:956.7px;line-height:20px;font-size:14.5px;color:#222;font-weight:normal;-webkit-text-stroke:0.2px #222;">0</div>
<div class="t" style="left:913.5px;width:100px;text-align:right;top:956.7px;line-height:20px;font-size:14.5px;color:#222;font-weight:normal;-webkit-text-stroke:0.2px #222;">300</div>
<div class="b" style="left:371px;top:985.4000000000001px;width:5px;height:16px;background:#a52228;"></div>
<div class="t" style="left:381.5px;top:984.7px;line-height:20px;font-size:13.5px;color:#a61e24;font-weight:normal;-webkit-text-stroke:0.2px #a61e24;">SALES</div>
<svg style="left:355px;top:992.7px" width="6" height="8" viewBox="0 0 6 8"><polygon points="0,0 5,4 0,8" fill="#222"/></svg>
<div class="t" style="left:587.5px;width:100px;text-align:right;top:984.7px;line-height:20px;font-size:14.5px;color:#222;font-weight:normal;-webkit-text-stroke:0.2px #222;">26</div>
<div class="t" style="left:671.5px;width:100px;text-align:right;top:984.7px;line-height:20px;font-size:14.5px;color:#222;font-weight:normal;-webkit-text-stroke:0.2px #222;">19</div>
<div class="t" style="left:760px;width:100px;text-align:right;top:984.7px;line-height:20px;font-size:14.5px;color:#222;font-weight:normal;-webkit-text-stroke:0.2px #222;">7</div>
<div class="t" style="left:913.5px;width:100px;text-align:right;top:984.7px;line-height:20px;font-size:14.5px;color:#222;font-weight:normal;-webkit-text-stroke:0.2px #222;">1,300</div>
<div class="b" style="left:371px;top:1013.4000000000001px;width:5px;height:16px;background:#dcdcdc;"></div>
<div class="t" style="left:381.5px;top:1012.7px;line-height:20px;font-size:13.5px;color:#1d1f21;font-weight:normal;-webkit-text-stroke:0.2px #1d1f21;">NO DEPARTMENT</div>
<div class="t" style="left:587.5px;width:100px;text-align:right;top:1012.7px;line-height:20px;font-size:14.5px;color:#222;font-weight:normal;-webkit-text-stroke:0.2px #222;">0</div>
<div class="t" style="left:671.5px;width:100px;text-align:right;top:1012.7px;line-height:20px;font-size:14.5px;color:#222;font-weight:normal;-webkit-text-stroke:0.2px #222;">0</div>
<div class="t" style="left:760px;width:100px;text-align:right;top:1012.7px;line-height:20px;font-size:14.5px;color:#222;font-weight:normal;-webkit-text-stroke:0.2px #222;">8</div>
<div class="t" style="left:913.5px;width:100px;text-align:right;top:1012.7px;line-height:20px;font-size:14.5px;color:#222;font-weight:normal;-webkit-text-stroke:0.2px #222;">1,600</div>
<div class="b" style="left:346px;top:1047px;width:1338px;height:1px;background:#dfe3e7;"></div>
<div class="t" style="left:361px;top:1058.0px;line-height:20px;font-size:14px;color:#333;font-weight:normal;-webkit-text-stroke:0.2px #333;">2nd Floor</div>
<div class="t" style="left:516.2px;width:160px;text-align:center;top:1058.0px;line-height:20px;font-size:14.5px;color:#333;font-weight:normal;-webkit-text-stroke:0.2px #333;">135</div>
<div class="t" style="left:683.4px;width:160px;text-align:center;top:1058.0px;line-height:20px;font-size:14.5px;color:#333;font-weight:normal;-webkit-text-stroke:0.2px #333;">23</div>
<div class="t" style="left:850.6px;width:160px;text-align:center;top:1058.0px;line-height:20px;font-size:14.5px;color:#333;font-weight:normal;-webkit-text-stroke:0.2px #333;">0</div>
<div class="t" style="left:1017.7px;width:160px;text-align:center;top:1058.0px;line-height:20px;font-size:14.5px;color:#333;font-weight:normal;-webkit-text-stroke:0.2px #333;">156</div>
<div class="t" style="left:1184.9px;width:160px;text-align:center;top:1058.0px;line-height:20px;font-size:14.5px;color:#333;font-weight:normal;-webkit-text-stroke:0.2px #333;">160</div>
<div class="t" style="left:1352.1px;width:160px;text-align:center;top:1058.0px;line-height:20px;font-size:14.5px;color:#333;font-weight:normal;-webkit-text-stroke:0.2px #333;">25,000</div>
<div class="b" style="left:1516px;top:1058px;width:118px;height:20px;background:#fff;border:1px solid #ffa200;box-sizing:border-box;"></div>
<div class="b" style="left:1516px;top:1058px;width:100px;height:20px;background:#ffa200;"></div>
<div class="t" style="left:1523.5px;top:1058.0px;line-height:20px;font-size:13px;color:#fff;font-weight:normal;letter-spacing:0.2px;-webkit-text-stroke:0.35px #fff;">85%</div>
<div class="t" style="left:361px;top:1098.0px;line-height:20px;font-size:14px;color:#333;font-weight:normal;-webkit-text-stroke:0.2px #333;">3rd Floor</div>
<div class="t" style="left:516.2px;width:160px;text-align:center;top:1098.0px;line-height:20px;font-size:14.5px;color:#333;font-weight:normal;-webkit-text-stroke:0.2px #333;">0</div>
<div class="t" style="left:683.4px;width:160px;text-align:center;top:1098.0px;line-height:20px;font-size:14.5px;color:#333;font-weight:normal;-webkit-text-stroke:0.2px #333;">77</div>
<div class="t" style="left:850.6px;width:160px;text-align:center;top:1098.0px;line-height:20px;font-size:14.5px;color:#333;font-weight:normal;-webkit-text-stroke:0.2px #333;">0</div>
<div class="t" style="left:1017.7px;width:160px;text-align:center;top:1098.0px;line-height:20px;font-size:14.5px;color:#333;font-weight:normal;-webkit-text-stroke:0.2px #333;">77</div>
<div class="t" style="left:1184.9px;width:160px;text-align:center;top:1098.0px;line-height:20px;font-size:14.5px;color:#333;font-weight:normal;-webkit-text-stroke:0.2px #333;">0</div>
<div class="t" style="left:1352.1px;width:160px;text-align:center;top:1098.0px;line-height:20px;font-size:14.5px;color:#333;font-weight:normal;-webkit-text-stroke:0.2px #333;">0</div>
<div class="b" style="left:1516px;top:1098px;width:118px;height:20px;background:#fff;border:1px solid #9a9a9a;box-sizing:border-box;"></div>
<div class="t" style="left:1523.5px;top:1098.0px;line-height:20px;font-size:13px;color:#222;font-weight:normal;-webkit-text-stroke:0.2px #222;">0%</div>
<svg style="left:1200px;top:680px" width="300" height="260" viewBox="-100 0 300 260"><path d="M54.00 7.50 A120 120 0 1 1 -2.57 233.33 L25.72 180.42 A60 60 0 1 0 54.00 67.50 Z" fill="#d9a6c3" stroke="#fff" stroke-width="1.5" stroke-linejoin="round"/><path d="M-2.57 233.33 A120 120 0 0 1 -63.69 104.09 L-4.85 115.79 A60 60 0 0 0 25.72 180.42 Z" fill="#a52228" stroke="#fff" stroke-width="1.5" stroke-linejoin="round"/><path d="M-63.69 104.09 A120 120 0 0 1 -45.78 60.83 L4.11 94.17 A60 60 0 0 0 -4.85 115.79 Z" fill="#167f7f" stroke="#fff" stroke-width="1.5" stroke-linejoin="round"/><path d="M-45.78 60.83 A120 120 0 0 1 -22.13 34.74 L15.94 81.12 A60 60 0 0 0 4.11 94.17 Z" fill="#6e6e6c" stroke="#fff" stroke-width="1.5" stroke-linejoin="round"/><path d="M-22.13 34.74 A120 120 0 0 1 8.08 16.63 L31.04 72.07 A60 60 0 0 0 15.94 81.12 Z" fill="#bcd98a" stroke="#fff" stroke-width="1.5" stroke-linejoin="round"/><path d="M8.08 16.63 A120 120 0 0 1 30.59 9.81 L42.29 68.65 A60 60 0 0 0 31.04 72.07 Z" fill="#5e3f8b" stroke="#fff" stroke-width="1.5" stroke-linejoin="round"/><path d="M30.59 9.81 A120 120 0 0 1 48.11 7.64 L51.06 67.57 A60 60 0 0 0 42.29 68.65 Z" fill="#52a646" stroke="#fff" stroke-width="1.5" stroke-linejoin="round"/><path d="M48.11 7.64 A120 120 0 0 1 54.00 7.50 L54.00 67.50 A60 60 0 0 0 51.06 67.57 Z" fill="#8f8a30" stroke="#fff" stroke-width="1.5" stroke-linejoin="round"/></svg>
<div class="t" style="left:1421.0px;width:40px;text-align:center;top:821.0px;line-height:20px;font-size:10.5px;color:#fff;font-weight:bold;text-shadow:0 0 2px rgba(0,0,0,0.35);">58%</div>
<div class="t" style="left:1252.0px;width:40px;text-align:center;top:838.0px;line-height:20px;font-size:10.5px;color:#fff;font-weight:bold;text-shadow:0 0 2px rgba(0,0,0,0.35);">20%</div>
<div class="t" style="left:1249.0px;width:40px;text-align:center;top:766.0px;line-height:20px;font-size:10.5px;color:#fff;font-weight:bold;text-shadow:0 0 2px rgba(0,0,0,0.35);">6%</div>
<div class="t" style="left:1266.0px;width:40px;text-align:center;top:740.0px;line-height:20px;font-size:10.5px;color:#fff;font-weight:bold;text-shadow:0 0 2px rgba(0,0,0,0.35);">5%</div>
<div class="t" style="left:1288.0px;width:40px;text-align:center;top:722.0px;line-height:20px;font-size:10.5px;color:#fff;font-weight:bold;text-shadow:0 0 2px rgba(0,0,0,0.35);">5%</div>
<div class="t" style="left:1202px;top:937.5px;line-height:20px;font-size:14.2px;color:#1d1f21;font-weight:bold;">Allocation</div>
<div class="t" style="left:1278px;top:937.5px;line-height:20px;font-size:14.2px;color:#2a2c2e;font-weight:normal;-webkit-text-stroke:0.2px #2a2c2e;">|</div>
<div class="t" style="left:1285.9px;top:937.5px;line-height:20px;font-size:14.5px;color:#2a2c2e;font-weight:normal;-webkit-text-stroke:0.2px #2a2c2e;">Occupancy</div>
<div class="t" style="left:1365.5px;top:937.5px;line-height:20px;font-size:14.2px;color:#2a2c2e;font-weight:normal;-webkit-text-stroke:0.2px #2a2c2e;">|</div>
<div class="t" style="left:1373.9px;top:937.5px;line-height:20px;font-size:14.9px;color:#2a2c2e;font-weight:normal;-webkit-text-stroke:0.2px #2a2c2e;">Allocated Area (sqft)</div>
<svg style="left:1500px;top:500px" width="240" height="100" viewBox="0 0 240 100">
<line x1="120.7" y1="10.7" x2="13" y2="92.5" stroke="#b4b4b4" stroke-width="1"/>
<line x1="120.7" y1="10.7" x2="229" y2="92.5" stroke="#b4b4b4" stroke-width="1"/>
</svg>
<div class="b" style="left:1512px;top:592px;width:218px;height:150px;background:#e9edf2;border:2px solid #8b8b8b;box-sizing:border-box;"></div>
<svg style="left:1584px;top:610px" width="76" height="76" viewBox="0 0 76 76">
<circle cx="38" cy="38" r="38" fill="#3dd0cc"/>
<g fill="none" stroke="#fff" stroke-width="1.7" stroke-linejoin="round" stroke-linecap="round">
<path d="M24.5 24.2 L16.6 23.8 V53.4 L31 55.6 L44.5 52.6 L57.8 55.6 V26.8 L44.5 22.6 L36.5 24.6"/>
<path d="M16.6 40 L31 40.6 L44.5 39 L57.8 40.6 M31 40.6 V55.6 M44.5 22.6 V52.6"/>
</g>
<path d="M30.4 16.5 a6.2 6.2 0 0 1 6.2 6.2 c0 4.4 -6.2 13.3 -6.2 13.3 c0 0 -6.2 -8.9 -6.2 -13.3 a6.2 6.2 0 0 1 6.2 -6.2z" fill="#fff"/>
<circle cx="30.4" cy="22.5" r="2.3" fill="#3dd0cc"/>
</svg>
<div class="t" style="left:1513.0px;width:216px;text-align:center;top:694.5px;line-height:30px;font-size:23.5px;color:#111;font-weight:normal;letter-spacing:0.6px;-webkit-text-stroke:0.4px #111;">View Floor Plan</div>
<svg style="left:1619.5px;top:503.3px" width="34" height="36" viewBox="0 0 34 36">
<path d="M11 29.5 L5 23.5 L1.4 18.2 Q0.2 15.6 2.3 14.6 Q4.6 13.6 6.6 16 L9 18.3 L7.2 6.2 Q6.8 1.3 9.6 1.3 Q12.3 1.3 12.8 6 L13.8 12.5 L14.1 11.2 Q14.6 9.1 16.6 9.1 Q19 9.1 19.3 11.6 L19.5 13 L19.9 11.6 Q20.4 9.4 22.5 9.4 Q25 9.6 25.5 12 L25.8 13.5 L26.6 12.5 Q27.6 11.1 29.1 11.6 Q31 12.4 30.8 15 L30.3 23 Q29.6 26 26.8 28.5 L26.2 32.2 L23 32.2 L20.8 29.9 L18.6 32.2 L11.4 32.2 Z" fill="#fff" stroke="#000" stroke-width="2" stroke-linejoin="round"/>
<path d="M15.6 19v7.4M19.8 19v7.4M24 19v7.4" stroke="#000" stroke-width="1.8"/>
</svg>
<svg style="left:500px;top:798px" width="34" height="36" viewBox="0 0 34 36">
<path d="M11 29.5 L5 23.5 L1.4 18.2 Q0.2 15.6 2.3 14.6 Q4.6 13.6 6.6 16 L9 18.3 L7.2 6.2 Q6.8 1.3 9.6 1.3 Q12.3 1.3 12.8 6 L13.8 12.5 L14.1 11.2 Q14.6 9.1 16.6 9.1 Q19 9.1 19.3 11.6 L19.5 13 L19.9 11.6 Q20.4 9.4 22.5 9.4 Q25 9.6 25.5 12 L25.8 13.5 L26.6 12.5 Q27.6 11.1 29.1 11.6 Q31 12.4 30.8 15 L30.3 23 Q29.6 26 26.8 28.5 L26.2 32.2 L23 32.2 L20.8 29.9 L18.6 32.2 L11.4 32.2 Z" fill="#fff" stroke="#000" stroke-width="2" stroke-linejoin="round"/>
<path d="M15.6 19v7.4M19.8 19v7.4M24 19v7.4" stroke="#000" stroke-width="1.8"/>
</svg>
<svg style="left:1715px;top:905px" width="70" height="72" viewBox="0 0 70 72">
<defs><filter id="sh940" x="-30%" y="-30%" width="160%" height="160%"><feDropShadow dx="0" dy="2" stdDeviation="2.5" flood-color="#000" flood-opacity="0.3"/></filter></defs>
<circle cx="35" cy="35" r="30" fill="#37474f" filter="url(#sh940)"/>
<path d="M31.5 18 H39 V27.5 H44.5 L35 38.5 L25.5 27.5 H31.5 Z" fill="#fff"/>
<path d="M21 36.5 H28.5 L35 42 L41.5 36.5 H49 Q50.5 36.5 50.5 38 V44.5 Q50.5 46 49 46 H21 Q19.5 46 19.5 44.5 V38 Q19.5 36.5 21 36.5 Z" fill="#fff"/>
<circle cx="42" cy="42.3" r="1.1" fill="#37474f"/><circle cx="46.5" cy="42.3" r="1.1" fill="#37474f"/>
</svg>
<svg style="left:1715px;top:975px" width="70" height="72" viewBox="0 0 70 72">
<defs><filter id="sh1010" x="-30%" y="-30%" width="160%" height="160%"><feDropShadow dx="0" dy="2" stdDeviation="2.5" flood-color="#000" flood-opacity="0.3"/></filter></defs>
<circle cx="35" cy="35" r="30" fill="#37474f" filter="url(#sh1010)"/>
<path d="M26 35 V22.5 H37 L44 29.5 V35" fill="none" stroke="#fff" stroke-width="3" stroke-linejoin="round"/>
<path d="M36 21 V30.5 H45.5" fill="none" stroke="#fff" stroke-width="1.5"/>
<rect x="19.5" y="33" width="31" height="11" rx="2" fill="#fff"/>
<rect x="24.5" y="40" width="21" height="9" fill="#fff"/>
<rect x="27.5" y="42.3" width="15" height="3.6" fill="#37474f"/>
<circle cx="46.5" cy="35.7" r="1.1" fill="#37474f"/>
</svg>
<div class="b" style="left:0px;top:1152px;width:1800px;height:48px;background:#474f57;"></div>
<div class="b" style="left:0px;top:1152px;width:1800px;height:2px;background:#3d4750;"></div>
<div class="t" style="left:20px;top:1163.5px;line-height:24px;font-size:13px;color:#fff;font-weight:normal;-webkit-text-stroke:0.2px #fff;"><span style="font-size:20px;font-weight:bold;">7</span><span style="display:inline-block;width:10px"></span><span style="font-size:13.3px;font-weight:bold;position:relative;top:-2.5px">Buildings</span></div>
<div class="t" style="left:523px;top:1163.5px;line-height:24px;font-size:13px;color:#fff;font-weight:normal;-webkit-text-stroke:0.2px #fff;"><span style="font-size:20px;font-weight:bold;">16</span><span style="display:inline-block;width:10.5px"></span><span style="font-size:13.3px;font-weight:bold;position:relative;top:-2.5px">Floors</span></div>
<div class="t" style="left:1018.5px;top:1163.5px;line-height:24px;font-size:13px;color:#fff;font-weight:normal;-webkit-text-stroke:0.2px #fff;"><span style="font-size:20px;font-weight:bold;">1,663</span><span style="display:inline-block;width:12px"></span><span style="font-size:13.3px;font-weight:bold;position:relative;top:-2.5px">Workstations</span></div>
<div class="t" style="left:1587.5px;top:1163.5px;line-height:24px;font-size:13px;color:#fff;font-weight:normal;-webkit-text-stroke:0.2px #fff;"><span style="font-size:20px;font-weight:bold;">388</span><span style="display:inline-block;width:14px"></span><span style="font-size:13.3px;font-weight:bold;position:relative;top:-2.5px">Workstations Available</span></div>
<svg style="left:1715px;top:1115px" width="70" height="72" viewBox="0 0 70 72">
<defs><filter id="sh1150" x="-30%" y="-30%" width="160%" height="160%"><feDropShadow dx="0" dy="2" stdDeviation="2.5" flood-color="#000" flood-opacity="0.3"/></filter></defs>
<circle cx="35" cy="35" r="30" fill="#37474f" filter="url(#sh1150)"/>
<path d="M21.5 20.5 Q21.5 18 24 18 H46.5 Q49 18 49 20.5 V49.5 L42 45.5 H24 Q21.5 45.5 21.5 43 Z" fill="#fff"/>
<path d="M25.5 38.5 Q35.5 43.5 45.5 38.5" fill="none" stroke="#37474f" stroke-width="1.8" stroke-linecap="round"/>
</svg>
</body></html>
